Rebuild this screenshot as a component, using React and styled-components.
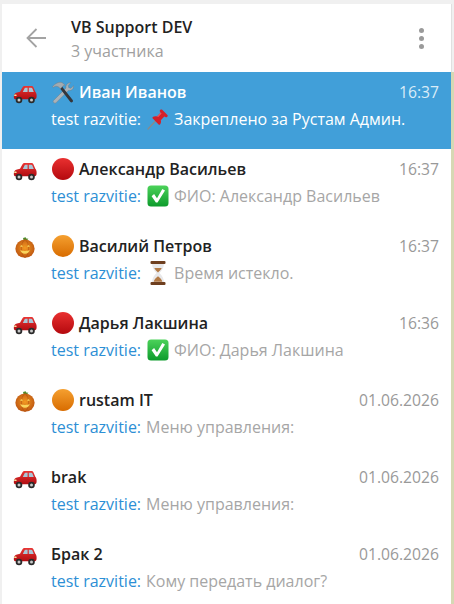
import React from "react";
import styled, { createGlobalStyle } from "styled-components";

const Global = createGlobalStyle`
  html, body { margin: 0; padding: 0; height: 100%; overflow: hidden; }
  body { font-family: "Open Sans", "Liberation Sans", sans-serif; background: #f0f0f0; }
`;

const Page = styled.div`
  width: 454px;
  height: 604px;
  padding: 4px 0 0 2px;
  box-sizing: border-box;
  display: flex;
  overflow: hidden;
`;

const Panel = styled.div`
  width: 449px;
  background: #fff;
  flex: none;
  overflow: hidden;
`;

const Side = styled.div`
  flex: 1;
  display: flex;
  flex-direction: column;
`;

const SideTop = styled.div`
  height: 68px;
  box-sizing: border-box;
  border-left: 1px solid #e0e0e0;
`;

const Wallpaper = styled.div`
  flex: 1;
  background: #d6d8b4;
`;

const Header = styled.header`
  height: 68px;
  display: flex;
  align-items: center;
  box-sizing: border-box;
  padding: 0 27px 0 24px;
  background: #fff;
`;

const Back = styled.svg`
  width: 20px;
  height: 20px;
  flex: none;
`;

const HeaderInfo = styled.div`
  margin-left: 25px;
  flex: 1;
  margin-top: 3px;
`;

const Title = styled.div`
  font-size: 16px;
  font-weight: 600;
  line-height: 22px;
  color: #222;
`;

const Subtitle = styled.div`
  font-size: 16px;
  line-height: 26px;
  color: #a0a0a0;
`;

const Dots = styled.div`
  display: flex;
  flex-direction: column;
  gap: 3px;
`;

const Dot = styled.span`
  width: 5px;
  height: 5px;
  border-radius: 50%;
  background: #9a9a9a;
`;

const Row = styled.div`
  height: 77px;
  box-sizing: border-box;
  padding: 8px 12px 0 10px;
  display: flex;
  background: ${(p) => (p.$active ? "#419fd9" : "#fff")};
`;

const Avatar = styled.div`
  width: 26px;
  flex: none;
  padding-top: 4px;
  margin-right: 13px;
  display: flex;
  justify-content: center;
  height: 26px;
`;

const Body = styled.div`
  flex: 1;
  min-width: 0;
`;

const TopLine = styled.div`
  display: flex;
  align-items: center;
  height: 24px;
`;

const Name = styled.div`
  flex: 1;
  display: flex;
  align-items: center;
  gap: 5px;
  font-size: 16px;
  font-weight: 600;
  color: ${(p) => (p.$active ? "#fff" : "#222")};
`;

const Glyph = styled.span`
  display: flex;
  flex: none;
  margin-left: 1px;
`;

const Time = styled.div`
  font-size: 15.7px;
  color: ${(p) => (p.$active ? "#d9ecf8" : "#999")};
`;

const Message = styled.div`
  display: flex;
  align-items: center;
  gap: 5px;
  height: 30px;
  font-size: 16px;
  white-space: nowrap;
  color: ${(p) => (p.$active ? "#fff" : "#a6a6a6")};
`;

const Sender = styled.span`
  color: ${(p) => (p.$active ? "#fff" : "#2d8fd5")};
`;

const PumpkinSvg = styled.svg`
  margin-top: -1px;
`;

const Car = () => (
  <svg width="24" height="20" viewBox="0 0 24 20">
    <defs>
      <linearGradient id="carBody" x1="0" y1="0" x2="0" y2="1">
        <stop offset="0" stopColor="#ea3533" />
        <stop offset="1" stopColor="#b00d12" />
      </linearGradient>
    </defs>
    <path d="M.8 13c0-2.500 1-3.800 3.200-4.400l3-.8 2.500-4.500c.5-.9 1.200-1.300 2.200-1.300h6.600c1 0 1.700.5 2.100 1.300l1.900 4.500c1 1 1.500 2.400 1.300 4.800-.1 1.700-.7 2.700-2 2.700H2.800c-1.300 0-2-.8-2-2.300z" fill="url(#carBody)" />
    <path d="M9.800 8l1.700-3.600c.2-.5.600-.7 1.100-.7h2V8zM15.800 3.700h2.400c.6 0 1 .3 1.200.8L20.800 8h-5z" fill="#a9c6d6" />
    <circle cx="6" cy="16" r="3.300" fill="#2a2a2a" />
    <circle cx="6" cy="16" r="1.500" fill="#c9c9c9" />
    <circle cx="18.500" cy="16" r="3.300" fill="#2a2a2a" />
    <circle cx="18.500" cy="16" r="1.500" fill="#c9c9c9" />
    <rect x="1.200" y="10.500" width="2.400" height="1.500" rx=".6" fill="#f8e39a" />
  </svg>
);

const Pumpkin = () => (
  <PumpkinSvg width="22" height="21" viewBox="0 1 22 22.500">
    <defs>
      <radialGradient id="pumpkinFill" cx=".5" cy=".45" r=".6">
        <stop offset="0" stopColor="#f39a22" />
        <stop offset="1" stopColor="#b9500f" />
      </radialGradient>
    </defs>
    <path d="M9.500 5l-.6-3 2.800-.8.6 1.300 2.300.4-2.100 2.300z" fill="#4e8a2a" />
    <ellipse cx="11" cy="13.500" rx="10.300" ry="9.800" fill="url(#pumpkinFill)" />
    <path d="M11 3.700c-3 2-3.800 5.800-3.800 9.800s.8 7.800 3.800 9.800M11 3.700c3 2 3.800 5.800 3.800 9.800s-.8 7.800-3.800 9.800" fill="none" stroke="#a9480e" strokeWidth=".5" />
    <path d="M5.500 10.800l2.300-1.300.8 2.500zM16.500 10.800l-2.300-1.300-.8 2.500z" fill="#f9d45c" />
    <path d="M6 15c2 .8 2.600.9 5 .9s3-.1 5-.9c-.4 2.500-2.400 3.900-5 3.900s-4.600-1.400-5-3.900z" fill="#f9d45c" />
  </PumpkinSvg>
);

const Ball = ({ id, light, dark }) => (
  <svg width="22" height="22" viewBox="0 0 22 22">
    <defs>
      <linearGradient id={id} x1="0" y1="0" x2="0" y2="1">
        <stop offset="0" stopColor={light} />
        <stop offset="1" stopColor={dark} />
      </linearGradient>
    </defs>
    <circle cx="11" cy="11" r="11" fill={`url(#${id})`} />
  </svg>
);

const RedBall = () => <Ball id="redBall" light="#e93030" dark="#b4090e" />;
const OrangeBall = () => <Ball id="orangeBall" light="#f5a030" dark="#d86c00" />;

const Tools = () => (
  <svg width="22" height="23" viewBox="0 0 22 23">
    {/* wrench, top right to bottom left */}
    <path d="M1.500 19.500L14 7c-.6-2.600 1.400-5.400 4.800-5.300l-2.600 2.700.5 2.300 2.300.6 2.700-2.700c.2 3.400-2.600 5.600-5.300 4.800L3.900 21.900c-.5.500-1.200.5-1.800 0l-.6-.6c-.5-.5-.5-1.300 0-1.800z" fill="#aab2b8" stroke="#6d777e" strokeWidth=".4" />
    {/* hammer handle and head */}
    <path d="M8 7.500l2-2L20.500 18.800c.7.800.6 1.500 0 2.100s-1.400.7-2.100 0z" fill="#35353a" />
    <path d="M.5 5.800C3 2.500 6.500.8 10 1.500l3 2.500-.8 1-.8-.4L8.500 7.700l-2.300-2c-1.700-.8-3.300-.7-4.800.8z" fill="#a3abb1" stroke="#6d747a" strokeWidth=".4" />
  </svg>
);

const Pin = () => (
  <svg width="22" height="22" viewBox="0 0 22 22">
    <path d="M1 21l7.500-8" stroke="#8a8a8a" strokeWidth="1.200" strokeLinecap="round" />
    <path d="M14 1.500c-1 .1-1.600 1.300-1 2.300l.6 1-3.600 3.600c-1.600-.5-3.200-.2-4.200.7-.5.500-.4 1.100 0 1.500l5.800 5.800c.5.400 1 .5 1.400 0 1-1 1.300-2.600.8-4.200l3.500-3.600 1 .5c1 .6 2.100 0 2.400-1 .1-.4 0-.8-.3-1.100l-5.200-5.200c-.4-.3-.8-.4-1.200-.3z" fill="#d4202a" />
    <path d="M13.600 4.800L10 8.400l1.300.5 3.300-3.300z" fill="#f0555c" />
  </svg>
);

const Check = () => (
  <svg width="22" height="22" viewBox="0 0 22 22">
    <defs>
      <linearGradient id="checkBox" x1="0" y1="0" x2="0" y2="1">
        <stop offset="0" stopColor="#4cd25a" />
        <stop offset="1" stopColor="#0d9b2c" />
      </linearGradient>
    </defs>
    <rect x=".500" y=".500" width="21" height="21" rx="3.500" fill="url(#checkBox)" />
    <path d="M4.600 11.300l2.500-2.200 2.900 4.100 5.300-9.300 2.700 1.500-7.500 12.200h-1.600z" fill="#fff" />
  </svg>
);

const Hourglass = () => (
  <svg width="22" height="24" viewBox="-2 0 22 24">
    <path d="M3 2.500h12c0 4-2 6.800-4.500 9.500 2.500 2.700 4.500 5.500 4.500 9.500H3c0-4 2-6.800 4.500-9.500C5 9.300 3 6.500 3 2.500z" fill="#e8e8ea" />
    <path d="M5.300 7h7.400c-.7 1.700-2.600 3.400-3.700 4.600C7.900 10.400 6 8.700 5.300 7zM4.700 20.800c.3-2.300 2.300-4 4.300-5.500 2 1.500 4 3.200 4.300 5.500z" fill="#b37a45" />
    <rect x="1.500" y="0" width="15" height="3" rx="1" fill="#6e3f1f" />
    <rect x="1.500" y="21" width="15" height="3" rx="1" fill="#6e3f1f" />
  </svg>
);

const chats = [
  { icon: <Car />, status: <Tools />, name: "Иван Иванов", time: "16:37", glyph: <Pin />, text: "Закреплено за Рустам Админ.", active: true },
  { icon: <Car />, status: <RedBall />, name: "Александр Васильев", time: "16:37", glyph: <Check />, text: "ФИО: Александр Васильев" },
  { icon: <Pumpkin />, status: <OrangeBall />, name: "Василий Петров", time: "16:37", glyph: <Hourglass />, text: "Время истекло." },
  { icon: <Car />, status: <RedBall />, name: "Дарья Лакшина", time: "16:36", glyph: <Check />, text: "ФИО: Дарья Лакшина" },
  { icon: <Pumpkin />, status: <OrangeBall />, name: "rustam IT", time: "01.06.2026", text: "Меню управления:" },
  { icon: <Car />, name: "brak", time: "01.06.2026", text: "Меню управления:" },
  { icon: <Car />, name: "Брак 2", time: "01.06.2026", text: "Кому передать диалог?" },
];

export default function App() {
  return (
    <Page>
      <Global />
      <Panel>
        <Header>
          <Back viewBox="0 0 20 20">
            <path d="M20 10H1.500M10.500 1l-9 9 9 9" fill="none" stroke="#a3a3a3" strokeWidth="1.800" />
          </Back>
          <HeaderInfo>
            <Title>VB Support DEV</Title>
            <Subtitle>3 участника</Subtitle>
          </HeaderInfo>
          <Dots>
            <Dot />
            <Dot />
            <Dot />
          </Dots>
        </Header>
        {chats.map((c, i) => (
          <Row key={i} $active={c.active}>
            <Avatar>{c.icon}</Avatar>
            <Body>
              <TopLine>
                <Name $active={c.active}>
                  {c.status && <Glyph>{c.status}</Glyph>}
                  {c.name}
                </Name>
                <Time $active={c.active}>{c.time}</Time>
              </TopLine>
              <Message $active={c.active}>
                <Sender $active={c.active}>test razvitie:</Sender>
                {c.glyph && <Glyph>{c.glyph}</Glyph>}
                {c.text}
              </Message>
            </Body>
          </Row>
        ))}
      </Panel>
      <Side>
        <SideTop />
        <Wallpaper />
      </Side>
    </Page>
  );
}
